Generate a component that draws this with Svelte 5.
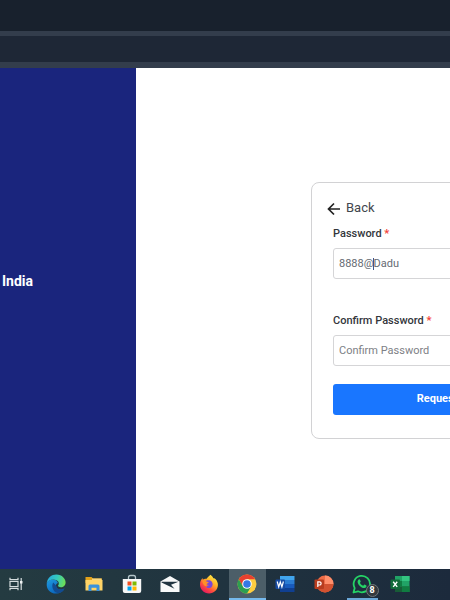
<script>
  let password = $state('8888@Dadu');
  let confirmation = $state('');
</script>

<div class="screen">
  <header>
    <div class="tabs"></div>
    <div class="toolbar"></div>
  </header>

  <main>
    <aside><h1>India</h1></aside>
    <section>
      <form class="card" onsubmit={(e) => e.preventDefault()}>
        <button type="button" class="back">
          <svg width="14" height="14" viewBox="0 0 14 14" fill="none" stroke="#222" stroke-width="1.7"><path d="M13 7H1.500M7 1.500L1.500 7L7 12.500" /></svg>
          <span>Back</span>
        </button>
        <label for="password">Password <b>*</b></label>
        <div class="field">
          <input id="password" type="text" bind:value={password} />
          <span class="caret"></span>
        </div>
        <label for="confirm">Confirm Password <b>*</b></label>
        <div class="field last">
          <input id="confirm" type="text" placeholder="Confirm Password" bind:value={confirmation} />
        </div>
        <button type="submit" class="submit">Request OTP</button>
      </form>
    </section>
  </main>

  <nav aria-label="Taskbar">
    <button aria-label="Task view" class="view">
      <svg width="14" height="14" viewBox="0 0 14 14" fill="none" stroke="#d5dcde" stroke-width="1.2"><path d="M1 .8v1.800h8V.8M1 13.200v-1.800h8v1.800M1 4.500h8v5H1zM12.200 1v12" /><path d="M11 4h2.500v2.500H11z" fill="#eef2f3" stroke="none" /></svg>
    </button>
    <div class="apps">
      <button aria-label="Edge">
        <svg width="20" height="20" viewBox="0 0 20 20">
          <defs>
            <linearGradient id="edgeTop" x1="0" y1=".4" x2="1" y2=".6"><stop stop-color="#27a9df" /><stop offset=".5" stop-color="#34c8bd" /><stop offset="1" stop-color="#70df50" /></linearGradient>
            <linearGradient id="edgeSide" x1="0" y1="0" x2=".7" y2="1"><stop stop-color="#1f9ae0" /><stop offset="1" stop-color="#0860b8" /></linearGradient>
          </defs>
          <path d="M.8 9C3 5 10 4 12 9c-3 1-3 6 2 6.500 2 .2 3.600-.5 4.500-1.200C17 18 13.500 19.600 10 19.600 4 19.600 0 15 .8 9z" fill="url(#edgeSide)" />
          <path d="M7.200 8.600C5 12 7 18.500 12 19.200c3 0 5.500-2.200 6.700-4.600-3.500 2-8 .8-8.200-2.600z" fill="#124b91" />
          <path d="M.7 9C1.500 3.800 5.500.4 10.300.4c6 0 9.300 4.400 9.300 8 0 3-2.200 4.800-4.700 4.800-2 0-3.400-.8-2.800-1.600 1.300-1.600 1-4.200-1.500-5.400C7 4.600 2.500 5.800.7 9z" fill="url(#edgeTop)" />
        </svg>
      </button>
      <button aria-label="File Explorer">
        <svg width="18" height="16" viewBox="0 0 18 16"><path d="M.5 1h6l1.500 1.500h9V7H.5z" fill="#e3a21a" /><path d="M7 2.500h9.500v2H7z" fill="#f5d683" /><path d="M.5 4h17v10.500H.5z" fill="#ffd467" /><path d="M3.500 15V10q0-1.500 1.500-1.500h8q1.500 0 1.500 1.500v5h-3v-3.200h-5V15z" fill="#3991dc" /></svg>
      </button>
      <button aria-label="Microsoft Store">
        <svg width="20" height="20" viewBox="0 0 20 20"><path d="M6.500 5V3.500q0-2 2-2h3q2 0 2 2V5" fill="none" stroke="#b5c5ca" stroke-width="1.300" /><path d="M.8 5h18.400v12q0 2-2 2H2.800q-2 0-2-2z" fill="#f7f7f7" /><path d="M5.500 7.500h4v4h-4z" fill="#f25022" /><path d="M10.500 7.500h4v4h-4z" fill="#7fba00" /><path d="M5.500 12.500h4v4h-4z" fill="#00a4ef" /><path d="M10.500 12.500h4v4h-4z" fill="#ffb900" /></svg>
      </button>
      <button aria-label="Mail">
        <svg width="20" height="18" viewBox="0 0 20 18"><path d="M.5 6.500L10 1l9.500 5.500V17H.5z" fill="#f8f9f9" /><path d="M1.500 6.700h17L11 9.800l3.500 4L1.500 7.500z" fill="#203440" /></svg>
      </button>
      <button aria-label="Firefox">
        <svg width="20" height="20" viewBox="0 0 20 20">
          <defs><linearGradient id="fire" x1=".9" y1=".1" x2=".3" y2="1"><stop stop-color="#fff04a" /><stop offset=".4" stop-color="#ffac25" /><stop offset=".7" stop-color="#ff4d3e" /><stop offset="1" stop-color="#e5195f" /></linearGradient></defs>
          <path d="M11.500.8c1.600 1.200 2.400 2.400 2.900 3.500 1-.1 1.300-.1 2 .6 1.600 1.600 2.700 4 2.500 6.300-.3 4.700-4 8.200-8.800 8.200C5 19.400 1 15.500 1 10.500c0-2.800 1-4.500 2.400-6.400l.5 1.700c1-.9 2-1.200 3.300-.9C8.500 3.300 10 2.200 11.500.8z" fill="url(#fire)" />
          <path d="M6 7.500c1.600-1.300 5-1.800 6.800.3 1.400 1.700 1 4.500-.7 5.600-2 1.300-5.100.5-5.600-1.700 1 .6 2.400.4 3.500-.8-1.900 0-2.700-1-2.800-2z" fill="#7948d8" />
          <path d="M3.400 6.500c1.200-1.200 3-1.100 3.900-.3-.3.700 0 1.200.8 1.500l1.700.3c-.2 1.200-2 1.400-2.300 2.400-.2.800.3 1.600 1 2.100-3 .2-5-2.500-5.100-6z" fill="#ff9028" />
        </svg>
      </button>
      <button aria-label="Chrome" class="active">
        <svg width="20" height="20" viewBox="0 0 20 20"><circle cx="10" cy="10" r="9.500" fill="#ffcd40" /><path d="M1.770 5.250A9.500 9.500 0 0 1 18.230 5.250H10L5.900 12.400z" fill="#e8402f" /><path d="M1.770 5.250A9.500 9.500 0 0 0 10 19.500L14.100 12.400H5.900z" fill="#2c9f50" /><circle cx="10" cy="10" r="4.800" fill="#fff" /><circle cx="10" cy="10" r="3.800" fill="#3478e5" /></svg>
      </button>
      <button aria-label="Word">
        <svg width="20" height="18" viewBox="0 0 20 18"><path d="M5 1h14.500v4H5z" fill="#41a5ee" /><path d="M5 5h14.500v4H5z" fill="#2b7cd3" /><path d="M5 9h14.500v4H5z" fill="#185abd" /><path d="M5 13h14.500v4H5z" fill="#103f91" /><rect x=".5" y="4.500" width="9.500" height="9.500" rx="1" fill="#174ba3" /><path d="M2.200 6.500L3.700 12l1.600-5 1.600 5 1.500-5.500" fill="none" stroke="#fff" stroke-width="1.200" /></svg>
      </button>
      <button aria-label="PowerPoint">
        <svg width="20" height="18" viewBox="0 0 20 18"><circle cx="11" cy="9" r="8.500" fill="#ed6c47" /><path d="M11 .5A8.500 8.500 0 0 1 19.500 9H11z" fill="#ff8f6b" /><path d="M2.500 9h17a8.500 8.500 0 0 1-17 0z" fill="#d35230" /><rect x=".5" y="4.500" width="9.500" height="9.500" rx="1" fill="#b83c1e" /><path d="M3.800 12V6.800h1.700a1.500 1.500 0 0 1 0 3.200H3.800" fill="none" stroke="#fff" stroke-width="1.200" /></svg>
      </button>
      <button aria-label="WhatsApp, 8 new" class="open">
        <svg width="20" height="20" viewBox="0 0 20 20"><path d="M1.500 18.500l1.200-4.400A8.200 8.200 0 1 1 6 17.300z" fill="none" stroke="#25d366" stroke-width="1.800" stroke-linejoin="round" /><path d="M6.700 5.500c.7-.5 1.100-.3 1.300.2l.7 1.700c.1.500-.9 1.200-.7 1.500.8 1.400 1.800 2.200 3.200 2.800.4.100 1-1.300 1.400-1.100l1.700.9c.8.500-.3 2.500-2 2.600-2.300.1-6.500-3.300-6.700-6.200 0-1.100.5-1.900 1.100-2.400z" fill="#25d366" /></svg>
        <span class="badge">8</span>
      </button>
      <button aria-label="Excel">
        <svg width="20" height="18" viewBox="0 0 20 18"><path d="M5 1h14.500v16H5z" fill="#21a366" /><path d="M12 1h7.500v5H12z" fill="#33c481" /><path d="M5 6h7v5.500H5z" fill="#107c41" /><path d="M5 11.500h14.500V17H5z" fill="#185c37" /><path d="M12 11.500h7.500V17H12z" fill="#107c41" /><rect x=".5" y="4.500" width="9.500" height="9.500" rx="1" fill="#126b3a" /><path d="M3.200 6.700l4 5.200M7.200 6.700l-4 5.200" fill="none" stroke="#fff" stroke-width="1.400" /></svg>
      </button>
    </div>
  </nav>
</div>

<style>
  * { box-sizing: border-box; }
  .screen {
    display: flex;
    flex-direction: column;
    height: 100vh;
    overflow: hidden;
    background: #fff;
    font-family: Roboto, "Liberation Sans", sans-serif;
  }
  header { flex: none; }
  .tabs { height: 36px; background: #18212d; border-bottom: 5px solid #333d4c; }
  .toolbar { height: 32px; background: #1e2736; border-bottom: 6px solid #333d4c; }
  main { display: flex; flex: 1; min-height: 0; }
  aside {
    flex: none;
    display: flex;
    align-items: center;
    width: 136px;
    padding: 0 2px 76px;
    background: #1a257d;
  }
  h1 { margin: 0; color: #fff; font-size: 14px; line-height: 20px; font-weight: 700; }
  section {
    flex: 1;
    min-width: 0;
    display: flex;
    align-items: center;
    padding: 0 0 16px 175px;
    overflow: hidden;
  }
  .card {
    flex: none;
    display: flex;
    flex-direction: column;
    width: 276px;
    padding: 16px 21px 23px;
    border: 1px solid #d2d2d4;
    border-radius: 8px;
  }
  button { padding: 0; border: 0; background: none; font-family: inherit; }
  .back {
    display: flex;
    align-items: center;
    align-self: flex-start;
    gap: 5px;
    margin: 0 0 9px -6px;
    color: #42474d;
    font-size: 13px;
    line-height: 18px;
  }
  .back svg { margin-top: 2px; }
  label { margin-bottom: 6px; color: #33363b; font-size: 11px; line-height: 16px; font-weight: 500; }
  label b { color: #f44336; font-weight: 700; }
  .field { position: relative; margin-bottom: 34px; }
  .last { margin-bottom: 18px; }
  input {
    display: block;
    width: 100%;
    height: 31px;
    padding: 0 5px;
    border: 1px solid #d5d5d7;
    border-radius: 3px;
    outline: none;
    background: #fff;
    color: #666b73;
    font-family: inherit;
    font-size: 11px;
  }
  input::placeholder { color: #7d8085; opacity: 1; }
  .caret { position: absolute; top: 10px; left: 40px; width: 1px; height: 12px; background: #3f568c; }
  .submit {
    height: 31px;
    padding-bottom: 2px;
    border-radius: 3px;
    background: #1976ff;
    color: #fff;
    font-size: 11px;
    font-weight: 700;
  }
  nav {
    flex: none;
    display: flex;
    height: 31px;
    background: linear-gradient(90deg, #243b41, #20333f 50%, #1c2a3c);
  }
  nav button {
    position: relative;
    flex: none;
    display: flex;
    align-items: center;
    justify-content: center;
    width: 37px;
    height: 31px;
    padding-bottom: 2px;
  }
  nav .view { width: 32px; margin-right: 5px; }
  .apps { flex: none; display: flex; justify-content: space-between; width: 382px; }
  .active { background: #4c5e68; box-shadow: inset 0 -2px #76b9ed; }
  .open::after {
    content: "";
    position: absolute;
    right: 3px;
    bottom: 0;
    left: 3px;
    height: 2px;
    background: #6ba8d8;
  }
  .badge {
    position: absolute;
    right: 2px;
    bottom: 3px;
    width: 13px;
    height: 13px;
    border: 1px solid #70777b;
    border-radius: 50%;
    background: #34393d;
    color: #fff;
    font-size: 9px;
    line-height: 11px;
    font-weight: 700;
    text-align: center;
  }
</style>
